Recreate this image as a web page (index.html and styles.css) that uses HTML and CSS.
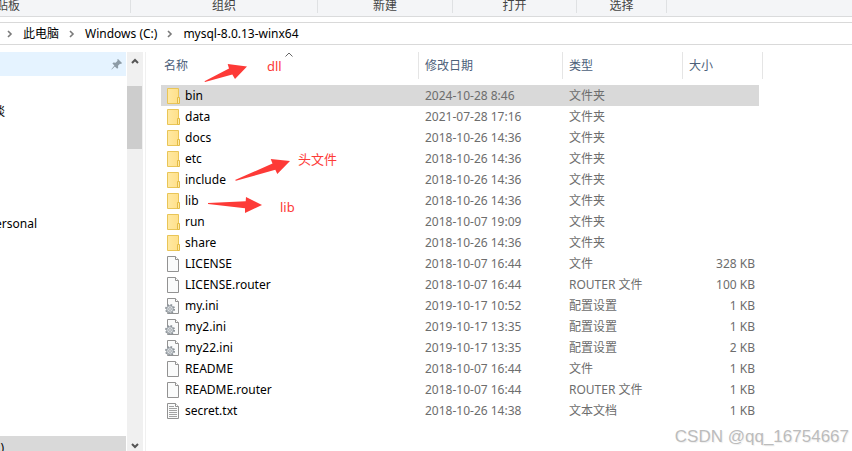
FILE: index.html
```html
<!DOCTYPE html>
<html lang="zh-CN">
<head>
<meta charset="utf-8">
<title>mysql-8.0.13-winx64</title>
<link rel="stylesheet" href="styles.css">
</head>
<body>
<svg class="defs" aria-hidden="true">
  <defs>
    <linearGradient id="fold" x2="1"><stop offset="0" stop-color="#ffe9a3"/><stop offset="1" stop-color="#ffe08a"/></linearGradient>
    <symbol id="folder" viewBox="0 0 16 18">
      <path d="M2.500 1.500h11v15h-11z" fill="url(#fold)" stroke="#e9c557"/>
      <path d="M12.500 10.500h2v6h-2z" fill="#ffe9a3" stroke="#e3bb45"/>
    </symbol>
    <symbol id="file" viewBox="0 0 16 18">
      <path d="M2.500 1.500h8l3 3v12h-11z" fill="#fafbfb" stroke="#929292"/>
      <path d="M10.500 1.500v3h3" fill="#fff" stroke="#929292"/>
    </symbol>
    <symbol id="ini" viewBox="0 0 16 18">
      <use href="#file"/>
      <circle cx="5" cy="12" r="4" fill="#dfe3e6" stroke="#8b9298" stroke-width="2" stroke-dasharray="1.6 1.54"/>
      <circle cx="5" cy="12" r="3.300" fill="#dce1e4" stroke="#8b9298" stroke-width=".8"/>
      <circle cx="5" cy="12" r="1.300" fill="#fff" stroke="#8b9298" stroke-width=".8"/>
    </symbol>
    <symbol id="txt" viewBox="0 0 16 18">
      <use href="#file"/>
      <path d="M4 4.500h5M4 6.500h8M4 8.500h8M4 10.500h8M4 12.500h8M4 14.500h8" stroke="#a2a2a2"/>
    </symbol>
    <symbol id="chev" viewBox="0 0 6 8"><path d="M1 1l3 3-3 3" fill="none" stroke="#7a7a7a" stroke-width="1.600"/></symbol>
  </defs>
</svg>

<header class="ribbon">
  <span class="group clip">剪贴板</span>
  <span class="group organize">组织</span>
  <span class="group create">新建</span>
  <span class="group open">打开</span>
  <span class="group select">选择</span>
</header>

<nav class="address" aria-label="地址">
  <svg class="chev"><use href="#chev"/></svg><a href="#">此电脑</a>
  <svg class="chev"><use href="#chev"/></svg><a href="#">Windows (C:)</a>
  <svg class="chev"><use href="#chev"/></svg><a href="#">mysql-8.0.13-winx64</a>
</nav>

<div class="body">
  <aside class="sidebar">
    <div class="tree">
      <div class="item quick">
        <svg class="pin" viewBox="0 0 12 12"><path d="M7 1l4 4-1 1-1-.2-2 2 .2 2-1 1-2.400-2.400L.8 11.600l-.4-.4L3.400 7.600 1.400 5.600l1-1 2.200.1 2-2L6.200 1.800z" fill="#8d9ba6"/></svg>
      </div>
      <div class="item chat"><span>聊天谈</span></div>
      <div class="item personal"><span>OneDrive - Personal</span></div>
      <div class="item drive"><span>Windows (C:)</span></div>
    </div>
    <div class="scroll">
      <button aria-label="向上"><svg viewBox="0 0 8 6"><path d="M1 5l3-3 3 3" fill="none" stroke="#555" stroke-width="2"/></svg></button>
      <div class="track"><div class="thumb"></div></div>
      <button aria-label="向下"><svg viewBox="0 0 8 6"><path d="M1 1l3 3 3-3" fill="none" stroke="#555" stroke-width="2"/></svg></button>
    </div>
  </aside>

  <main class="files">
    <table>
      <colgroup><col class="c-name"><col class="c-date"><col class="c-type"><col class="c-size"></colgroup>
      <thead><tr>
        <th><button>名称</button><svg class="sort" viewBox="0 0 8 5"><path d="M.5 4.500L4 1l3.500 3.500" fill="none" stroke="#666"/></svg></th>
        <th><button>修改日期</button></th><th><button>类型</button></th><th><button>大小</button></th>
      </tr></thead>
      <tbody>
        <tr class="selected"><td><div class="name"><svg><use href="#folder"/></svg>bin</div></td><td>2024-10-28 8:46</td><td>文件夹</td><td></td></tr>
        <tr><td><div class="name"><svg><use href="#folder"/></svg>data</div></td><td>2021-07-28 17:16</td><td>文件夹</td><td></td></tr>
        <tr><td><div class="name"><svg><use href="#folder"/></svg>docs</div></td><td>2018-10-26 14:36</td><td>文件夹</td><td></td></tr>
        <tr><td><div class="name"><svg><use href="#folder"/></svg>etc</div></td><td>2018-10-26 14:36</td><td>文件夹</td><td></td></tr>
        <tr><td><div class="name"><svg><use href="#folder"/></svg>include</div></td><td>2018-10-26 14:36</td><td>文件夹</td><td></td></tr>
        <tr><td><div class="name"><svg><use href="#folder"/></svg>lib</div></td><td>2018-10-26 14:36</td><td>文件夹</td><td></td></tr>
        <tr><td><div class="name"><svg><use href="#folder"/></svg>run</div></td><td>2018-10-07 19:09</td><td>文件夹</td><td></td></tr>
        <tr><td><div class="name"><svg><use href="#folder"/></svg>share</div></td><td>2018-10-26 14:36</td><td>文件夹</td><td></td></tr>
        <tr><td><div class="name"><svg><use href="#file"/></svg>LICENSE</div></td><td>2018-10-07 16:44</td><td>文件</td><td>328 KB</td></tr>
        <tr><td><div class="name"><svg><use href="#file"/></svg>LICENSE.router</div></td><td>2018-10-07 16:44</td><td>ROUTER 文件</td><td>100 KB</td></tr>
        <tr><td><div class="name"><svg><use href="#ini"/></svg>my.ini</div></td><td>2019-10-17 10:52</td><td>配置设置</td><td>1 KB</td></tr>
        <tr><td><div class="name"><svg><use href="#ini"/></svg>my2.ini</div></td><td>2019-10-17 13:35</td><td>配置设置</td><td>1 KB</td></tr>
        <tr><td><div class="name"><svg><use href="#ini"/></svg>my22.ini</div></td><td>2019-10-17 13:35</td><td>配置设置</td><td>2 KB</td></tr>
        <tr><td><div class="name"><svg><use href="#file"/></svg>README</div></td><td>2018-10-07 16:44</td><td>文件</td><td>1 KB</td></tr>
        <tr><td><div class="name"><svg><use href="#file"/></svg>README.router</div></td><td>2018-10-07 16:44</td><td>ROUTER 文件</td><td>1 KB</td></tr>
        <tr><td><div class="name"><svg><use href="#txt"/></svg>secret.txt</div></td><td>2018-10-26 14:38</td><td>文本文档</td><td>1 KB</td></tr>
      </tbody>
    </table>
  </main>
</div>

<svg class="arrows" viewBox="0 0 320 240" aria-hidden="true">
  <path d="M204.500 81.300L229 68.500 227.700 64 247 66.500 235 79 232.300 74.500 205 82zM235 180L272.500 163.500 270.700 159 290 161 277.300 174 275.300 169.700 236 180.800zM208 203L245.700 201.300 246 197 262 205 245 213 245 208.300 208 204z" fill="#fd3a37"/>
</svg>
<span class="note note-dll">dll</span>
<span class="note note-head">头文件</span>
<span class="note note-lib">lib</span>
<span class="watermark">CSDN @qq_16754667</span>
</body>
</html>
```
FILE: styles.css
```css
* { box-sizing: border-box; }
body {
  margin: 0;
  height: 100vh;
  overflow: hidden;
  position: relative;
  display: flex;
  flex-direction: column;
  background: #fff;
  color: #000;
  font: 12px/16px "Noto Sans", "Noto Sans CJK SC", sans-serif;
}
button {
  padding: 0;
  border: 0;
  background: none;
  font: inherit;
  color: inherit;
}
.defs { position: absolute; width: 0; height: 0; }

.ribbon {
  display: flex;
  height: 17px;
  flex: none;
  background: #f4f5f7;
  border-bottom: 1px solid #dadbdc;
  color: #444;
}
.group {
  height: 13px;
  line-height: 12px;
  text-align: center;
  border-right: 1px solid #dfe1e3;
}
.clip { width: 131px; text-align: left; text-indent: -16px; }
.organize { width: 187px; }
.create { width: 135px; }
.open { width: 124px; }
.select { width: 90px; }

.address {
  display: flex;
  align-items: center;
  flex: none;
  height: 23px;
  margin-top: 5px;
  padding-left: 7px;
  border: solid #d9d9d9;
  border-width: 1px 0;
}
.address a { color: #000; text-decoration: none; margin: 0 10px; }
.chev { width: 6px; height: 8px; }

.body { display: flex; flex: 1; min-height: 0; margin-top: 7px; }
.sidebar { display: flex; flex: none; width: 146px; border-right: 1px solid #f0f0f0; }
.tree { flex: 1; display: flex; flex-direction: column; overflow: hidden; white-space: nowrap; }
.item { display: flex; align-items: center; height: 24px; flex: none; }
.quick { justify-content: flex-end; padding-right: 3px; background: #e5f3ff; }
.pin { width: 12px; height: 12px; }
.chat { margin-top: 24px; }
.chat span, .personal span, .drive span { display: flex; justify-content: flex-end; }
.chat span { width: 5px; }
.personal { margin-top: 88px; }
.personal span { width: 37px; }
.drive { margin-top: auto; height: 15px; background: #d9d9d9; align-items: flex-start; line-height: 24px; }
.drive span { width: 4px; }
.scroll { display: flex; flex-direction: column; width: 16px; margin: 0 2px 0 1px; background: #f0f0f0; }
.scroll button { display: flex; align-items: center; justify-content: center; height: 18px; }
.scroll svg { width: 8px; height: 6px; }
.scroll button:last-child { height: 10px; }
.track { flex: 1; padding-top: 16px; }
.thumb { width: 15px; height: 63px; background: #cdcdcd; }

.files { flex: 1; padding-left: 15px; min-width: 0; }
table { border-collapse: separate; border-spacing: 0; table-layout: fixed; width: 602px; }
.c-name { width: 258px; }
.c-date { width: 144px; }
.c-type { width: 120px; }
.c-size { width: 80px; }
th {
  position: relative;
  height: 27px;
  padding: 0 6px;
  border-right: 1px solid #e5e5e5;
  text-align: left;
  font-weight: 400;
  color: #4c607a;
}
th:first-child { padding-left: 3px; }
.sort { position: absolute; top: 0; left: 124px; width: 8px; height: 5px; }
tbody::before { content: ""; display: block; height: 6px; }
td { height: 21px; padding: 0 6px; color: #6d6d6d; white-space: nowrap; }
td:first-child { color: #000; padding-left: 4px; }
td:last-child { text-align: right; padding-right: 8px; }
.name { display: flex; align-items: center; gap: 4px; height: 20px; }
.name svg { width: 16px; height: 18px; }
.selected td { background: #d9d9d9; }
.selected td:last-child { background: linear-gradient(#d9d9d9, #d9d9d9) 0 0 / calc(100% - 4px) 100% no-repeat; }

.arrows { position: absolute; left: 0; top: 0; width: 320px; height: 240px; pointer-events: none; }
.note { position: absolute; color: #fd3a37; font-size: 13px; }
.note-dll { left: 267px; top: 58px; }
.note-head { left: 298px; top: 151px; }
.note-lib { left: 280px; top: 199px; }
.watermark {
  position: absolute;
  right: 3px;
  bottom: 4px;
  font: 17px/20px "Liberation Sans", sans-serif;
  color: #bcbcbc;
  text-shadow: 1px 1px 1px #eee;
}
```
